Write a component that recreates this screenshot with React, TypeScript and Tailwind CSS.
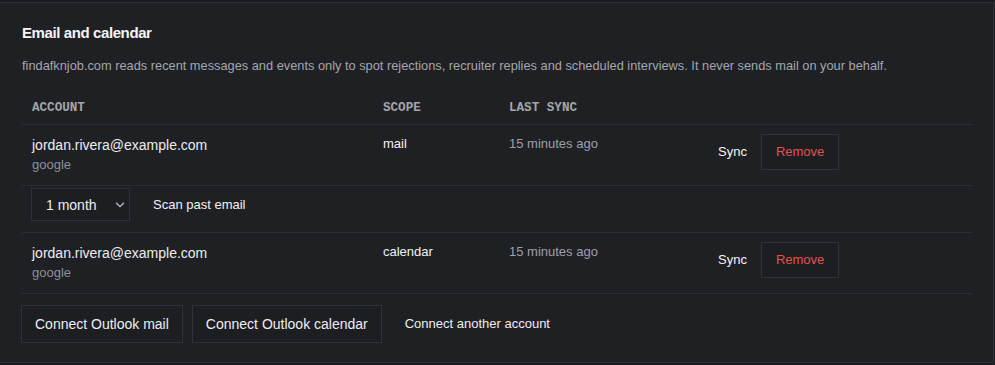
import React from "react";

const rows = [
  { email: "jordan.rivera@example.com", provider: "google", scope: "mail", last: "15 minutes ago", scan: true },
  { email: "jordan.rivera@example.com", provider: "google", scope: "calendar", last: "15 minutes ago", scan: false },
];

function Chevron() {
  return (
    <svg width="10" height="6" viewBox="0 0 10 6" fill="none" className="text-[#c9ccd1]">
      <path d="M1.5 1.2 L5 4.6 L8.5 1.2" stroke="currentColor" strokeWidth="1.2" strokeLinecap="round" strokeLinejoin="round" />
    </svg>
  );
}

export default function App() {
  return (
    <div className="min-h-screen bg-[#1a1c1f] pt-[2px] font-['Liberation_Sans',Arial,sans-serif]">
      <div className="-ml-px w-[995px] h-[361px] border border-[#2b2e34] bg-[#1e2024] pl-[22px] pr-[20px] pt-[20px]">
        <h2 className="text-[15px] leading-[20px] font-bold tracking-[-0.4px] text-[#f4f5f6]">Email and calendar</h2>
        <p className="mt-[13px] text-[12.8px] leading-[20px] text-[#a3a7ae]">
          findafknjob.com reads recent messages and events only to spot rejections, recruiter replies and scheduled interviews. It never sends mail on your behalf.
        </p>

        <div className="mt-[14px]">
          <div className="grid grid-cols-[351px_126px_198px_1fr] h-[35px] border-b border-[#2a2d33] pt-[10px] font-['Liberation_Mono',monospace] text-[12.6px] leading-[16px] font-bold text-[#a2a7ae]">
            <div className="pl-[10px]">ACCOUNT</div>
            <div className="pl-[10px]">SCOPE</div>
            <div className="pl-[10px]">LAST SYNC</div>
            <div />
          </div>

          {rows.map((r, i) => (
            <React.Fragment key={i}>
              <div className="grid grid-cols-[351px_126px_198px_1fr] border-b border-[#2a2d33]">
                <div className="pl-[10px] pt-[10px] pb-[10px]">
                  <div className="text-[14px] leading-[20px] text-[#eceef0]">{r.email}</div>
                  <div className="text-[13px] leading-[20px] text-[#8c9097]">{r.provider}</div>
                </div>
                <div className="pl-[10px] pt-[10px] text-[13px] leading-[18px] text-[#f2f3f5]">{r.scope}</div>
                <div className="pl-[10px] pt-[10px] text-[13px] leading-[18px] text-[#9da1a8]">{r.last}</div>
                <div className="pl-[10px] pt-[9px] flex items-start gap-[3px]">
                  <button className="px-[10px] py-[8px] border border-transparent text-[13px] leading-[18px] text-[#f4f5f6]">Sync</button>
                  <button className="px-[14px] py-[8px] border border-[#2e3137] bg-[#1c1e22] text-[13px] leading-[18px] text-[#e5534b]">Remove</button>
                </div>
              </div>
              {r.scan && (
                <div className="flex items-center pt-[2px] pb-[11px] border-b border-[#2a2d33]">
                  <div className="ml-[9px] w-[99px] h-[33px] border border-[#2e3137] bg-[#1c1e22] flex items-center justify-between pl-[14px] pr-[4px]">
                    <span className="text-[14px] leading-[20px] text-[#eceef0]">1 month</span>
                    <Chevron />
                  </div>
                  <button className="ml-[8px] px-[14px] py-[6px] border border-transparent text-[13px] leading-[18px] text-[#f2f3f5]">Scan past email</button>
                </div>
              )}
            </React.Fragment>
          ))}

          <div className="mt-[11px] -ml-px flex items-center gap-[9px]">
            <button className="px-[13px] py-[8px] border border-[#2e3137] bg-[#1c1e22] text-[14px] leading-[20px] text-[#eceef0]">Connect Outlook mail</button>
            <button className="px-[13px] py-[8px] border border-[#2e3137] bg-[#1c1e22] text-[14px] leading-[20px] text-[#eceef0]">Connect Outlook calendar</button>
            <button className="px-[13px] py-[8px] border border-transparent text-[13px] leading-[20px] text-[#eceef0]">Connect another account</button>
          </div>
        </div>
      </div>
    </div>
  );
}
